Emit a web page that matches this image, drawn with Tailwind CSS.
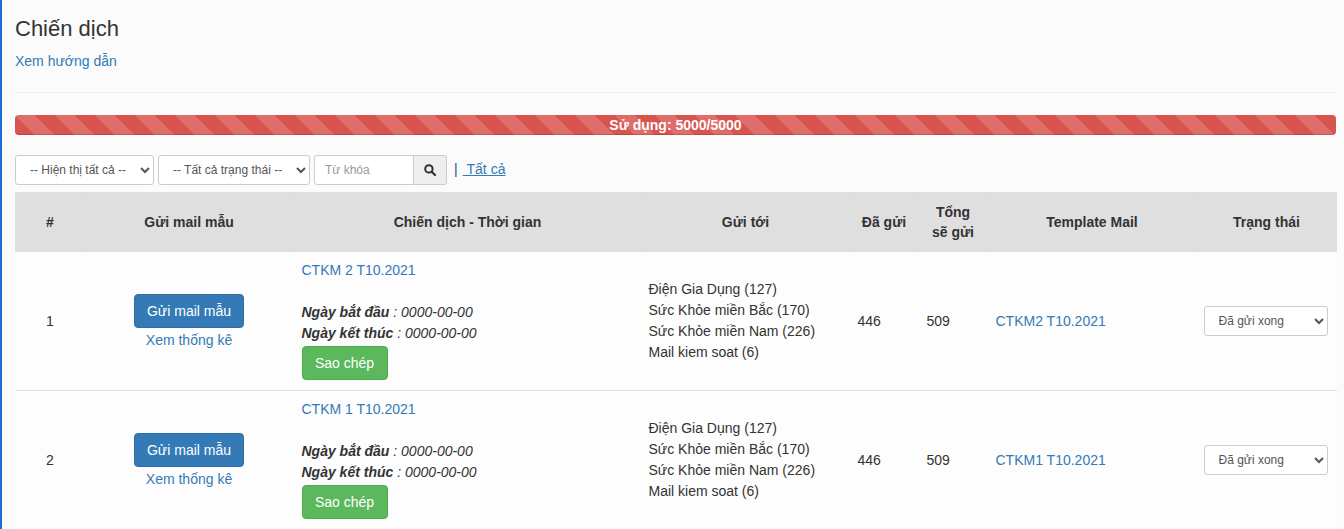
<!DOCTYPE html>
<html lang="vi">
<head>
    <meta charset="UTF-8">
    <title>Chiến dịch</title>
    <script src="https://cdn.jsdelivr.net/npm/@tailwindcss/browser@4"></script>
</head>
<body class="h-[529px] overflow-hidden bg-[#fbfbfb] font-['Liberation_Sans',Arial,sans-serif] text-[14px] leading-[20px] text-[#333]">
<div class="h-full border-l-2 border-[#1b6ed6] pl-[13px] pr-2">

    <!-- Page title -->
    <h1 class="pt-[16px] text-[22px] leading-[26px] font-normal">Chiến dịch</h1>
    <a href="#" class="mt-[9px] block text-[#337ab7]">Xem hướng dẫn</a>
    <hr class="mt-[21px] border-t border-[#eeeeee]">

    <!-- Usage bar -->
    <div class="mt-[22px] h-5 rounded bg-[#d9534f] bg-[linear-gradient(45deg,rgba(255,255,255,.15)_25%,transparent_25%,transparent_50%,rgba(255,255,255,.15)_50%,rgba(255,255,255,.15)_75%,transparent_75%,transparent)] bg-[length:40px_40px] text-center text-[14px] leading-[20px] font-bold text-white shadow-[inset_0_-1px_0_rgba(0,0,0,.15)]">Sử dụng: 5000/5000</div>

    <!-- Filters -->
    <div class="mt-5 flex h-[30px] items-center">
        <select class="h-[30px] w-[139px] rounded-[3px] border border-[#ccc] bg-white pl-[10px] text-[12px] text-[#555]">
            <option>-- Hiện thị tất cả --</option>
        </select>
        <select class="ml-[4px] h-[30px] w-[152px] rounded-[3px] border border-[#ccc] bg-white pl-[10px] text-[12px] text-[#555]">
            <option>-- Tất cả trạng thái --</option>
        </select>
        <div class="ml-[4px] flex h-[30px] w-[133px]">
            <input type="text" placeholder="Từ khóa" class="h-[30px] w-[100px] rounded-l-[3px] border border-[#ccc] bg-white px-[10px] text-[12px] placeholder:text-[#999]">
            <button class="flex h-[30px] w-[33px] items-center justify-center rounded-r-[3px] border border-l-0 border-[#ccc] bg-[#eeeeee]">
                <svg width="12" height="12" viewBox="0 0 12 12" fill="none" stroke="#333" stroke-width="2"><circle cx="4.9" cy="4.9" r="3.7"/><path d="M7.7 7.7L11 11" stroke-linecap="round" stroke-width="2.2"/></svg>
            </button>
        </div>
        <span class="mb-[2px] ml-[7px] text-[#23527c]">|</span>
        <a href="#" class="mb-[2px] ml-[5px] text-[#337ab7] underline">&nbsp;Tất cả</a>
    </div>

    <!-- Campaign table -->
    <table class="mt-[7px] w-[1321px] table-fixed border-collapse">
        <colgroup>
            <col class="w-[69px]"><col class="w-[209px]"><col class="w-[348px]"><col class="w-[208px]"><col class="w-[69px]"><col class="w-[69px]"><col class="w-[209px]"><col class="w-[140px]">
        </colgroup>
        <thead>
            <tr class="h-[59px] bg-[#dfdfdf] text-center font-bold">
                <th class="border border-[#dddddd]">#</th>
                <th class="border border-[#dddddd]">Gửi mail mẫu</th>
                <th class="border border-[#dddddd]">Chiến dịch - Thời gian</th>
                <th class="border border-[#dddddd]">Gửi tới</th>
                <th class="border border-[#dddddd]">Đã gửi</th>
                <th class="border border-[#dddddd]">Tổng<br>sẽ gửi</th>
                <th class="border border-[#dddddd]">Template Mail</th>
                <th class="border border-[#dddddd]">Trạng thái</th>
            </tr>
        </thead>
        <tbody class="bg-[#fdfdfd]">
            <tr class="h-[139px] border-b border-[#dddddd]">
                <td class="text-center">1</td>
                <td class="pt-[2px] text-center">
                    <a href="#" class="inline-block h-[34px] w-[110px] rounded border border-[#2e6da4] bg-[#337ab7] leading-[32px] text-white">Gửi mail mẫu</a>
                    <a href="#" class="mt-[2px] block text-[#337ab7]">Xem thống kê</a>
                </td>
                <td class="px-2 pt-2 align-top">
                    <a href="#" class="block text-[#337ab7]">CTKM 2 T10.2021</a>
                    <p class="mt-[22px] leading-[21px] italic"><b>Ngày bắt đầu</b> : 0000-00-00</p>
                    <p class="leading-[21px] italic"><b>Ngày kết thúc</b> : 0000-00-00</p>
                    <a href="#" class="mt-[2px] block h-[34px] w-[86px] rounded border border-[#4cae4c] bg-[#5cb85c] text-center leading-[32px] text-white">Sao chép</a>
                </td>
                <td class="pr-2 pl-[7px] leading-[21px]">Điện Gia Dụng (127)<br>Sức Khỏe miền Bắc (170)<br>Sức Khỏe miền Nam (226)<br>Mail kiem soat (6)</td>
                <td class="px-2">446</td>
                <td class="px-2">509</td>
                <td class="pr-2 pl-2"><a href="#" class="text-[#337ab7]">CTKM2 T10.2021</a></td>
                <td class="pr-2 pl-[7px]">
                    <select class="h-[30px] w-[124px] rounded-[3px] border border-[#ccc] bg-white pl-[10px] text-[12px] text-[#555]"><option>Đã gửi xong</option></select>
                </td>
            </tr>
            <tr class="h-[139px]">
                <td class="text-center">2</td>
                <td class="pt-[2px] text-center">
                    <a href="#" class="inline-block h-[34px] w-[110px] rounded border border-[#2e6da4] bg-[#337ab7] leading-[32px] text-white">Gửi mail mẫu</a>
                    <a href="#" class="mt-[2px] block text-[#337ab7]">Xem thống kê</a>
                </td>
                <td class="px-2 pt-2 align-top">
                    <a href="#" class="block text-[#337ab7]">CTKM 1 T10.2021</a>
                    <p class="mt-[22px] leading-[21px] italic"><b>Ngày bắt đầu</b> : 0000-00-00</p>
                    <p class="leading-[21px] italic"><b>Ngày kết thúc</b> : 0000-00-00</p>
                    <a href="#" class="mt-[2px] block h-[34px] w-[86px] rounded border border-[#4cae4c] bg-[#5cb85c] text-center leading-[32px] text-white">Sao chép</a>
                </td>
                <td class="pr-2 pl-[7px] leading-[21px]">Điện Gia Dụng (127)<br>Sức Khỏe miền Bắc (170)<br>Sức Khỏe miền Nam (226)<br>Mail kiem soat (6)</td>
                <td class="px-2">446</td>
                <td class="px-2">509</td>
                <td class="pr-2 pl-2"><a href="#" class="text-[#337ab7]">CTKM1 T10.2021</a></td>
                <td class="pr-2 pl-[7px]">
                    <select class="h-[30px] w-[124px] rounded-[3px] border border-[#ccc] bg-white pl-[10px] text-[12px] text-[#555]"><option>Đã gửi xong</option></select>
                </td>
            </tr>
        </tbody>
    </table>
</div>
</body>
</html>
